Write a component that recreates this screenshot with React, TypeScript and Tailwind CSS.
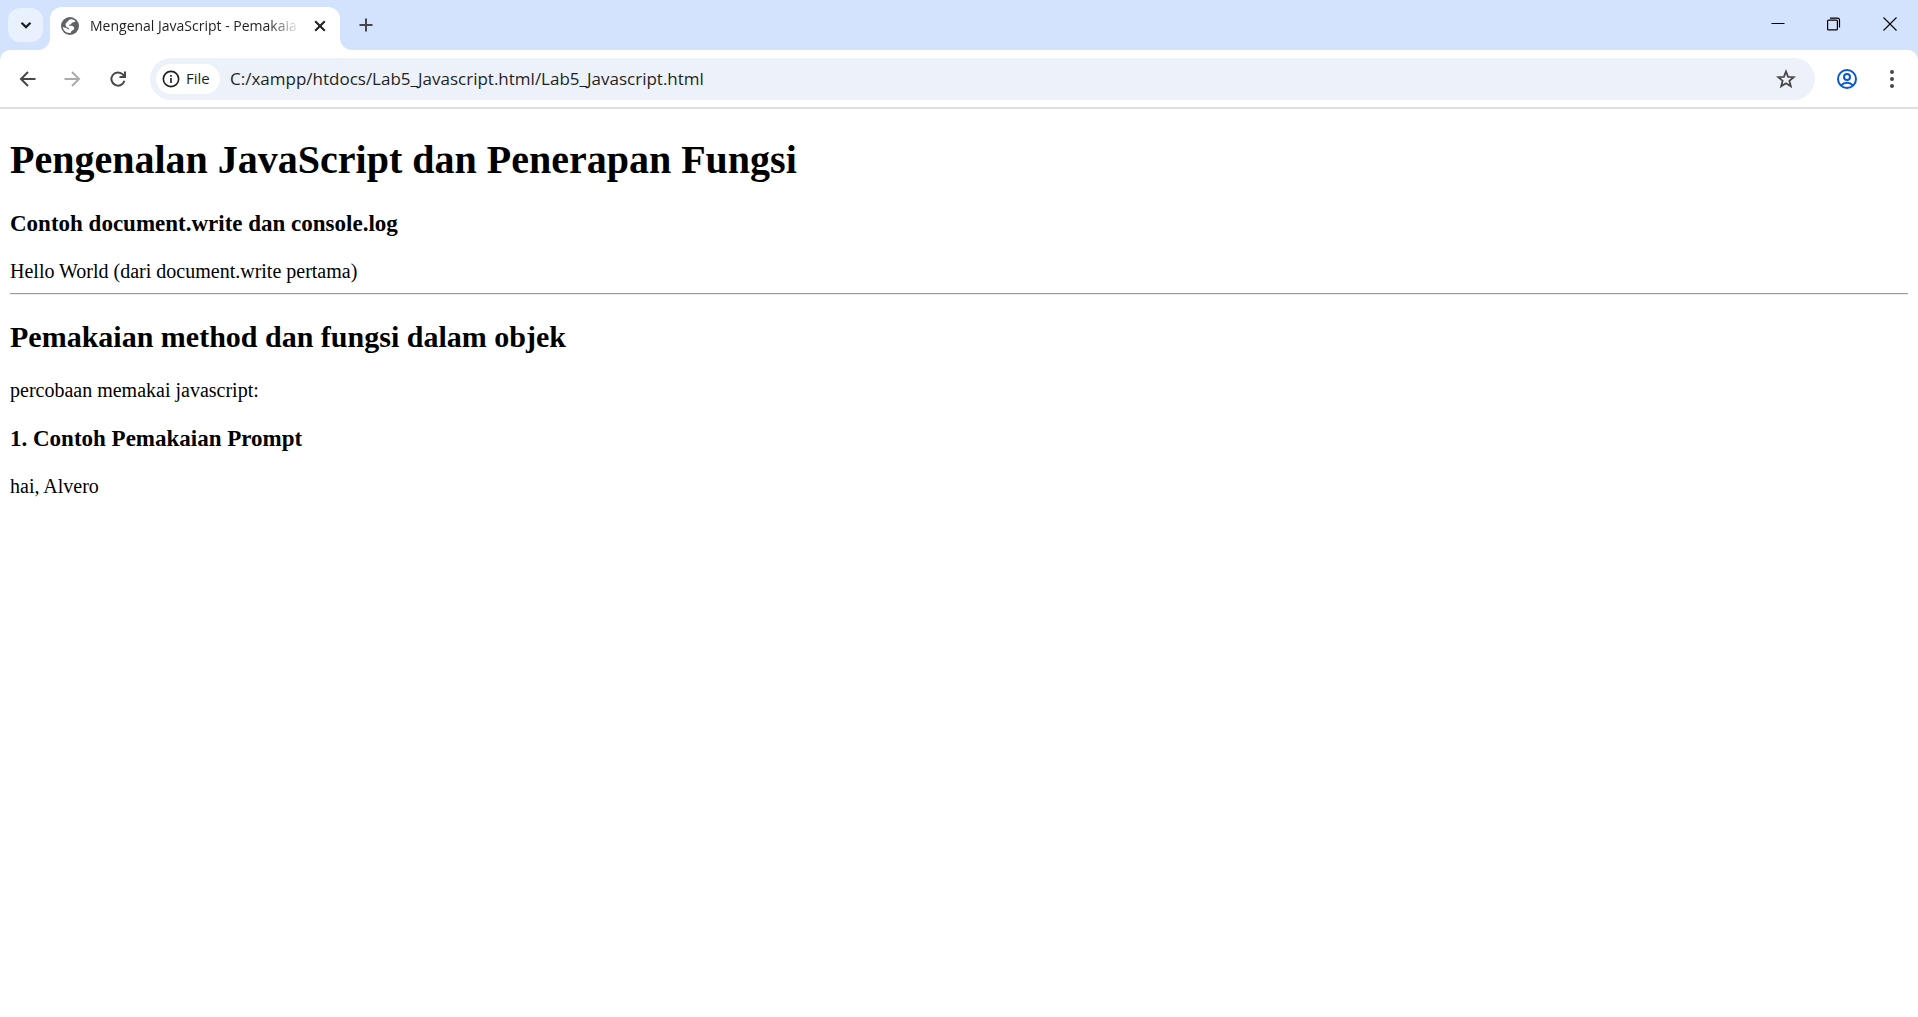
import type { ReactNode, SVGProps } from "react";

const toolButton = "grid size-9 shrink-0 place-items-center rounded-full text-[#474747]";

function Icon({ children, ...rest }: { children: ReactNode } & SVGProps<SVGSVGElement>) {
  return (
    <svg viewBox="0 0 20 20" width="20" height="20" fill="none" stroke="currentColor" strokeWidth="2" aria-hidden="true" {...rest}>
      {children}
    </svg>
  );
}

function TabStrip() {
  return (
    <div className="flex h-[50px] items-end bg-[#d3e3fd]">
      <button aria-label="Search tabs" className="mb-2 ml-2 grid h-[34px] w-[35px] shrink-0 place-items-center rounded-xl bg-[#e9f0fe] text-[#1f1f1f]">
        <Icon strokeWidth="2.2"><path d="M5.5 7.7 10 12.1l4.5-4.4" /></Icon>
      </button>
      <div className="relative ml-[7px] flex h-[43px] w-[290px] items-center rounded-t-xl bg-white pb-1.5 pl-[10px]">
        <svg className="absolute -left-3 bottom-0" width="12" height="12" aria-hidden="true"><path d="M0 12A12 12 0 0 0 12 0V12z" fill="#fff" /></svg>
        <svg className="absolute -right-3 bottom-0" width="12" height="12" aria-hidden="true"><path d="M12 12A12 12 0 0 1 0 0V12z" fill="#fff" /></svg>
        <svg width="20" height="20" viewBox="0 0 20 20" className="shrink-0" aria-hidden="true">
          <circle cx="10" cy="10" r="9" fill="#5f6368" />
          <path d="M10.500 3.200c2 0 3.800.600 5 2-1.200 1.600-2.600.8-3.700 1.700-.8.7-.6 1.500-1.600 1.600-.8.1-1.200.2-1.200.8 0 .8 1.200.500 2.300.500 1.800 0 2.900 1 2.900 2.500 0 2.400-2.600 1.900-3 3.400-.2.700-.6 1.300-1.600 1.300C6 17 3.100 14.200 2.800 10.800c1.700 1.300 3.700.7 4.800 2.200.5.700 1.400.6 1.400-.2 0-1-1.500-.8-2.400-1.700C5.200 9.700 5.200 7.500 6.600 6.600 7.700 5.900 8.700 3.200 10.500 3.200z" fill="#fff" />
        </svg>
        <span className="ml-[10px] w-[210px] overflow-hidden bg-linear-to-r from-[#1f1f1f] from-85% to-transparent bg-clip-text text-sm whitespace-nowrap text-transparent">
          Mengenal JavaScript - Pemakaia
        </span>
        <button aria-label="Close tab" className="ml-[10px] grid size-5 place-items-center text-[#1f1f1f]">
          <Icon><path d="m5.200 5.200 9.600 9.600m0-9.600-9.600 9.600" /></Icon>
        </button>
      </div>
      <button aria-label="New tab" className="mb-[7px] ml-2 grid size-9 place-items-center text-[#474747]">
        <Icon><path d="M10 3.500v13M3.500 10h13" /></Icon>
      </button>
      <div className="ml-auto flex h-full text-black">
        <button aria-label="Minimize" className="grid h-12 w-14 place-items-center">
          <Icon strokeWidth="1"><path d="M3.500 9.500h13" /></Icon>
        </button>
        <button aria-label="Restore" className="grid h-12 w-14 place-items-center">
          <Icon strokeWidth="1.200"><rect x="3.600" y="6.100" width="9.800" height="9.800" rx="1" /><path d="M6 4.100h7.500a2 2 0 0 1 2 2v7.500" /></Icon>
        </button>
        <button aria-label="Close" className="grid h-12 w-14 place-items-center">
          <Icon strokeWidth="1.100"><path d="m3.500 3.500 13 13m0-13-13 13" /></Icon>
        </button>
      </div>
    </div>
  );
}

function Toolbar() {
  return (
    <div className="bg-[#d3e3fd]">
      <div className="flex h-[59px] items-center rounded-t-[10px] border-b-2 border-[#dedede] bg-white pl-[10px]">
        <button aria-label="Back" className={toolButton}>
          <Icon><path d="M17.500 10H3.500M10 3l-7 7 7 7" /></Icon>
        </button>
        <button aria-label="Forward" disabled className="ml-2 grid size-9 shrink-0 place-items-center text-[#ababab]">
          <Icon><path d="M2.500 10h14M10 3l7 7-7 7" /></Icon>
        </button>
        <button aria-label="Reload" className="ml-[10px] grid size-9 shrink-0 place-items-center text-[#474747]">
          <Icon><path d="M16.400 11.700A6.600 6.600 0 1 1 15 5.700L17 8M17 2.500V8h-5.500" /></Icon>
        </button>
        <div className="ml-[14px] flex h-[42px] flex-1 items-center rounded-full bg-[#ecf1fa] pl-[6px]">
          <button className="flex h-[30px] w-16 items-center gap-[6px] rounded-full bg-white pl-1.5 text-[15px] font-medium text-[#1f1f1f]">
            <Icon width="18" height="18" strokeWidth="1.800" className="shrink-0"><circle cx="10" cy="10" r="8.500" /><path d="M10 9v5.500M10 5.500v2" /></Icon>
            File
          </button>
          <input aria-label="Address" defaultValue="C:/xampp/htdocs/Lab5_Javascript.html/Lab5_Javascript.html" className="ml-[10px] min-w-0 flex-1 bg-transparent text-[17px] text-[#1f1f1f] outline-none" />
          <button aria-label="Bookmark this tab" className="mr-[11px] grid size-9 place-items-center text-[#474747]">
            <Icon strokeWidth="1.800"><path d="m10 2.500 2.100 5.300 5.600.4-4.300 3.600 1.400 5.500L10 14.300l-4.800 3 1.400-5.500-4.300-3.600 5.600-.4z" /></Icon>
          </button>
        </div>
        <button aria-label="Profile" className="ml-[14px] grid size-9 shrink-0 place-items-center text-[#0b57d0]">
          <Icon><circle cx="10" cy="10" r="9" /><circle cx="10" cy="8" r="3" /><path d="M4 16.500c3.500-3.600 8.500-3.600 12 0" /></Icon>
        </button>
        <button aria-label="Menu" className="mr-2 ml-[9px] grid size-9 shrink-0 place-items-center text-[#474747]">
          <Icon fill="currentColor" stroke="none"><circle cx="10" cy="3" r="2" /><circle cx="10" cy="10" r="2" /><circle cx="10" cy="17" r="2" /></Icon>
        </button>
      </div>
    </div>
  );
}

export default function App() {
  return (
    <div className="min-h-screen bg-white font-['Open_Sans',sans-serif]">
      <header>
        <TabStrip />
        <Toolbar />
      </header>
      <main className="px-[10px] pt-7 font-['Liberation_Serif',serif] text-xl/[23px] text-black">
        <h1 className="text-[40px]/[46px] font-bold">Pengenalan JavaScript dan Penerapan Fungsi</h1>
        <h3 className="mt-7 text-[23px]/[26px] font-bold">Contoh document.write dan console.log</h3>
        <p className="mt-[23px]">Hello World (dari document.write pertama)</p>
        <hr className="mt-[10px] h-[2px] border-t border-b border-t-[#9a9a9a] border-b-[#eeeeee]" />
        <h2 className="mt-[25px] text-[30px]/[34px] font-bold">Pemakaian method dan fungsi dalam objek</h2>
        <p className="mt-[25px]">percobaan memakai javascript:</p>
        <h3 className="mt-6 text-[23px]/[26px] font-bold">1. Contoh Pemakaian Prompt</h3>
        <p className="mt-[23px]">hai, Alvero</p>
      </main>
    </div>
  );
}
